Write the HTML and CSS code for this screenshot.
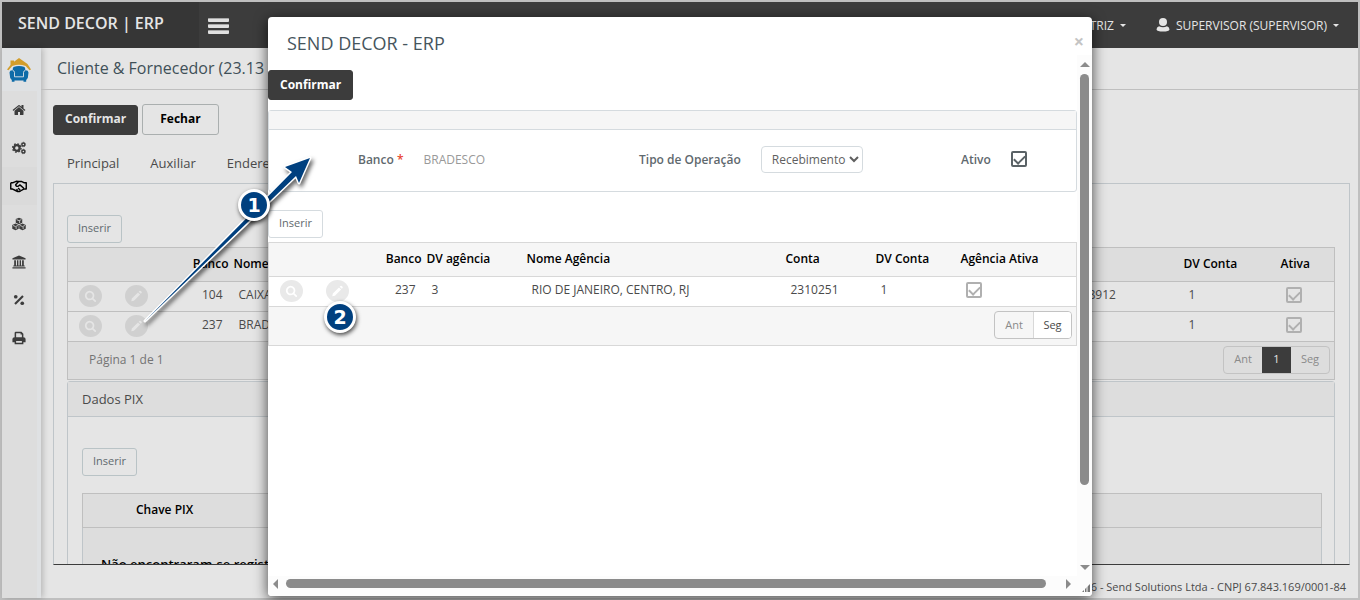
FILE: index.html
```html
<!DOCTYPE html>
<html lang="pt-BR">
<head>
    <meta charset="UTF-8">
    <meta name="viewport" content="width=device-width, initial-scale=1.0">
    <title>SEND DECOR | ERP</title>
    <link rel="stylesheet" href="styles.css">
</head>
<body>
    <!-- shared icons -->
    <svg class="sprite" aria-hidden="true">
        <symbol id="icon-search" viewBox="0 0 1792 1792"><path d="M1216 832q0-185-131.500-316.500t-316.500-131.500-316.500 131.500-131.500 316.500 131.500 316.500 316.500 131.500 316.500-131.500 131.500-316.500zm512 832q0 52-38 90t-90 38q-54 0-90-38l-343-342q-179 124-399 124-143 0-273.500-55.500t-225-150-150-225-55.500-273.500 55.500-273.500 150-225 225-150 273.500-55.500 273.500 55.500 225 150 150 225 55.500 273.500q0 220-124 399l343 343q37 37 37 90z"/></symbol>
        <symbol id="icon-pencil" viewBox="0 0 16 16"><path d="M10 3.200 12.800 6 4.600 14.200 1 15l.8-3.600zM10.900 2.300l1-1q.9-.8 1.800 0l1 1q.8.9 0 1.800l-1 1z"/></symbol>
    </svg>

    <div class="app">
        <header class="topbar">
            <a class="brand" href="#">SEND DECOR | ERP</a>
            <button class="menu-toggle" type="button" aria-label="Menu"><span></span><span></span><span></span></button>
            <div class="topbar-right">
                <a href="#">MATRIZ <i class="caret"></i></a>
                <a href="#">
                    <svg class="user" viewBox="0 0 14 14"><circle cx="7" cy="4" r="4"/><path d="M3 8.200Q7 10.500 11 8.200 13.500 9 13.500 11.500 13 13.500 7 13.500T.5 11.500Q.5 9 3 8.200z"/></svg>
                    SUPERVISOR (SUPERVISOR) <i class="caret"></i>
                </a>
            </div>
        </header>

        <div class="layout">
            <nav class="sidebar">
                <a class="logo" href="#" aria-label="Send Decor">
                    <svg viewBox="0 0 24 24">
                        <path fill="#d29d2b" d="M0 11.500 3.500 7V2.500H7v1.200L12 0l8.500 6L24 11.500l-1.500.8-3.800-4.300Q12 5.600 5.300 8l-3.800 4.300z"/>
                        <path fill="#0e6ba8" d="M6.500 9Q12 7.200 17.500 9 18.500 10.500 18.300 12.200 21.300 12 21.500 14.500L20.800 20l-1.600 2v1.800h-2.700v-1.300h-9v1.300H4.800V22l-1.600-2-.7-5.500Q2.700 12 5.700 12.200 5.500 10.500 6.500 9z"/>
                        <path fill="none" stroke="#dfe3e8" stroke-width=".9" d="M5.700 12.400q1.800.4 1.800 2.100v4.300h9v-4.300q0-1.700 1.800-2.100"/>
                    </svg>
                </a>
                <a href="#" aria-label="Início"><svg viewBox="0 0 1792 1792"><path d="M1472 992v480q0 26-19 45t-45 19h-384v-384h-256v384h-384q-26 0-45-19t-19-45v-480q0-1 .5-3t.5-3l575-474 575 474q1 2 1 6zm223-69l-62 74q-8 9-21 11h-3q-13 0-21-7l-692-577-692 577q-12 8-24 7-13-2-21-11l-62-74q-8-10-7-23.500t11-21.500l719-599q32-26 76-26t76 26l244 204v-195q0-14 9-23t23-9h192q14 0 23 9t9 23v408l219 182q10 8 11 21.500t-7 23.500z"/></svg></a>
                <a href="#" aria-label="Configurações"><svg viewBox="0 0 16 16"><g fill="none" stroke="#3c3c3c"><circle cx="5.500" cy="8" r="3.200" stroke-width="2.600"/><circle cx="5.500" cy="8" r="4.800" stroke-width="1.600" stroke-dasharray="1.900 1.870"/><circle cx="13" cy="4" r="1.700" stroke-width="1.600"/><circle cx="13" cy="4" r="2.600" stroke-width=".8" stroke-dasharray="1.100 1"/><circle cx="13" cy="12" r="1.700" stroke-width="1.600"/><circle cx="13" cy="12" r="2.600" stroke-width=".8" stroke-dasharray="1.100 1"/></g></svg></a>
                <a class="active" href="#" aria-label="Parceiros"><svg class="wide" viewBox="0 0 18 14"><g fill="none" stroke="#000" stroke-width="1.500" stroke-linejoin="round"><path d="M.8 3.500v6.700h2L7 12.300q2 1 4 0l3.500-2.100h2.700V3.500h-2.500L12 2.200H9.200L6 5.600q.2 2.400 2.800 1.600l1.700-1.400 4.100 3.600M9 2.300 6.500 2 3.300 3.500H.8"/><path d="m8.500 9.200 2.300 2M6.800 10.500l1.500 1.300"/></g></svg></a>
                <a href="#" aria-label="Estoque"><svg viewBox="0 0 16 16"><path d="M8 .8 11.700 2.400v4.100L8 8.200 4.300 6.500V2.400zM4 7.500l3.700 1.600v4.200L4 15 .3 13.300V9.100zM12 7.500l3.700 1.600v4.200L12 15l-3.700-1.700V9.100z"/><path fill="none" stroke="#ddd" stroke-width=".9" d="m5.200 3 2.800 1.200L10.800 3M8.700 7V4.600M1.200 9.700 4 10.900l2.800-1.200M4.700 13.700v-2.400M9.200 9.700l2.800 1.200 2.800-1.200M12.700 13.700v-2.400"/></svg></a>
                <a href="#" aria-label="Financeiro"><svg viewBox="0 0 16 16"><path d="M8 .5 15.500 3.600V5H.5V3.600zM2.500 6h2v6h-2zM5.700 6h1.600v6H5.700zM8.700 6h1.600v6H8.700zM11.500 6h2v6h-2zM1.500 12h13v1.200h-13zM.5 14h15v1.500H.5z"/></svg></a>
                <a href="#" aria-label="Impostos"><svg viewBox="0 0 16 16"><circle cx="4.300" cy="4.300" r="2.100"/><circle cx="11.700" cy="11.700" r="2.100"/><path d="m11.700 2.600 1.700 1.700-9.100 9.100-1.700-1.700z"/></svg></a>
                <a href="#" aria-label="Relatórios"><svg viewBox="0 0 16 16"><path fill-rule="evenodd" d="M3 7V2.200Q3 .8 4.300.8h6.500L13 3v4q2.500 0 2.500 2.200v3.600H13v2.400H3v-2.400H.5V9.200Q.5 7 3 7zm1.700 0h6.600V4H9.800V2.500H4.700zm0 4.500v2h6.600v-2z"/></svg></a>
            </nav>

            <main class="page">
                <h1>Cliente &amp; Fornecedor (23.13</h1>
                <div class="content">
                    <div class="actions">
                        <button class="btn btn-dark" type="button">Confirmar</button>
                        <button class="btn btn-light" type="button">Fechar</button>
                    </div>
                    <div class="tabs">
                        <a href="#">Principal</a>
                        <a href="#">Auxiliar</a>
                        <a href="#">Endereço</a>
                    </div>
                    <div class="panel">
                        <button class="btn-small" type="button">Inserir</button>
                        <table class="grid">
                            <colgroup><col class="c-icon"><col class="c-icon2"><col class="c-banco"><col><col class="c-conta"><col class="c-dv"><col class="c-ativa"></colgroup>
                            <thead>
                                <tr><th></th><th></th><th class="right">Banco</th><th>Nome</th><th></th><th>DV Conta</th><th>Ativa</th></tr>
                            </thead>
                            <tbody>
                                <tr>
                                    <td><button class="round" type="button" aria-label="Ver"><svg><use href="#icon-search"/></svg></button></td>
                                    <td><button class="round" type="button" aria-label="Editar"><svg><use href="#icon-pencil"/></svg></button></td>
                                    <td class="right">104</td><td>CAIXA</td><td>8912</td><td>1</td>
                                    <td><input class="check muted" type="checkbox" aria-label="Ativa" checked disabled></td>
                                </tr>
                                <tr>
                                    <td><button class="round" type="button" aria-label="Ver"><svg><use href="#icon-search"/></svg></button></td>
                                    <td><button class="round" type="button" aria-label="Editar"><svg><use href="#icon-pencil"/></svg></button></td>
                                    <td class="right">237</td><td>BRADESCO</td><td></td><td>1</td>
                                    <td><input class="check muted" type="checkbox" aria-label="Ativa" checked disabled></td>
                                </tr>
                            </tbody>
                        </table>
                        <div class="grid-footer">
                            <span>Página 1 de 1</span>
                            <div class="pager">
                                <button type="button">Ant</button><button class="current" type="button">1</button><button type="button">Seg</button>
                            </div>
                        </div>
                        <section class="pix">
                            <h2>Dados PIX</h2>
                            <div class="pix-body">
                                <button class="btn-small" type="button">Inserir</button>
                                <div class="pix-head">Chave PIX</div>
                                <div class="pix-empty">Não encontraram-se registros</div>
                            </div>
                        </section>
                    </div>
                </div>
                <footer class="copyright">© 2026 - Send Solutions Ltda - CNPJ 67.843.169/0001-84</footer>
            </main>
        </div>
    </div>

    <div class="modal" role="dialog" aria-labelledby="modalTitle">
        <div class="modal-header">
            <h2 id="modalTitle">SEND DECOR - ERP</h2>
            <button class="close" type="button" aria-label="Fechar">×</button>
        </div>
        <div class="modal-main">
            <div class="modal-body">
                <button class="btn btn-dark" type="button">Confirmar</button>
                <div class="card">
                    <div class="card-head"></div>
                    <form class="card-body">
                        <div class="field">
                            <span class="label">Banco <em>*</em></span>
                            <span class="value">BRADESCO</span>
                        </div>
                        <div class="field">
                            <label for="tipo">Tipo de Operação</label>
                            <select id="tipo"><option>Recebimento</option></select>
                        </div>
                        <div class="field">
                            <label for="ativo">Ativo</label>
                            <input class="check" id="ativo" type="checkbox" checked>
                        </div>
                    </form>
                </div>
                <button class="btn-small" type="button">Inserir</button>
                <table class="grid">
                    <colgroup><col class="c-icon"><col class="c-icon2"><col class="c-mbanco"><col class="c-dvag"><col><col class="c-mconta"><col class="c-mdv"><col class="c-mativa"></colgroup>
                    <thead>
                        <tr><th></th><th></th><th class="right">Banco</th><th>DV agência</th><th>Nome Agência</th><th>Conta</th><th>DV Conta</th><th>Agência Ativa</th></tr>
                    </thead>
                    <tbody>
                        <tr>
                            <td><button class="round" type="button" aria-label="Ver"><svg><use href="#icon-search"/></svg></button></td>
                            <td><button class="round" type="button" aria-label="Editar"><svg><use href="#icon-pencil"/></svg></button></td>
                            <td class="right">237</td><td>3</td><td>RIO DE JANEIRO, CENTRO, RJ</td><td>2310251</td><td>1</td>
                            <td><input class="check muted" type="checkbox" aria-label="Agência Ativa" checked disabled></td>
                        </tr>
                    </tbody>
                </table>
                <div class="grid-footer">
                    <span></span>
                    <div class="pager">
                        <button type="button">Ant</button><button class="enabled" type="button">Seg</button>
                    </div>
                </div>
            </div>
            <div class="scroll-y"><i class="up"></i><span></span><i class="down"></i></div>
        </div>
        <div class="scroll-x"><i class="left"></i><span></span><i class="right-arrow"></i><svg class="grip" viewBox="0 0 8 8"><path d="M8 0v8H0z"/><path stroke="#fcfcfc" d="M2.500 8V4M5 8V2"/></svg></div>
    </div>

    <!-- step markers -->
    <svg class="arrow" viewBox="0 0 200 190">
        <path d="M15 181 162 32 155 27 180 18 169 43 166 36z"/>
    </svg>
    <div class="step step-1">1</div>
    <div class="step step-2">2</div>
</body>
</html>
```
FILE: styles.css
```css
* {
    box-sizing: border-box;
}

body {
    margin: 0;
    position: relative;
    font-family: "Trebuchet MS", "Open Sans", sans-serif;
    font-size: 12px;
    color: #4a4a4a;
}

h1, h2 {
    margin: 0;
    font-weight: 400;
}

a {
    color: inherit;
    text-decoration: none;
}

button, select, input {
    font-family: inherit;
    margin: 0;
}

.sprite {
    display: none;
}

.app {
    height: 100vh;
    min-height: 600px;
    display: flex;
    flex-direction: column;
    border: 2px solid #bfbfbf;
    background: #e5e5e5;
}

/* top bar */
.topbar {
    display: flex;
    align-items: center;
    height: 46px;
    flex: none;
    background: #3c3c3c;
    color: #e5e5e5;
}

.brand {
    width: 197px;
    height: 46px;
    padding-left: 16px;
    line-height: 42px;
    background: #363636;
    font-size: 16px;
    font-weight: 600;
}

.menu-toggle {
    display: flex;
    flex-direction: column;
    gap: 2px;
    width: 39px;
    padding: 2px 9px 0;
    border: 0;
    background: none;
}

.menu-toggle span {
    height: 4px;
    border-top: 1px solid #a8a8a8;
    border-radius: 1px;
    background: #e0e0e0;
}

.topbar-right {
    display: flex;
    gap: 30px;
    margin-left: auto;
    padding-right: 19px;
}

.topbar-right a {
    display: flex;
    align-items: center;
    gap: 6px;
}

.user {
    width: 14px;
    height: 14px;
    fill: #e5e5e5;
}

.caret {
    border: 3px solid transparent;
    border-top-color: #e5e5e5;
    border-bottom: 0;
}

/* sidebar */
.layout {
    flex: 1;
    min-height: 0;
    display: flex;
}

.sidebar {
    width: 39px;
    flex: none;
    background: #ddd;
    border-right: 4px solid #dfe1e3;
    box-shadow: 2px 0 6px rgba(0, 0, 0, 0.2);
}

.sidebar a {
    display: flex;
    align-items: center;
    justify-content: center;
    height: 38px;
    padding-right: 2px;
}

.sidebar svg {
    width: 14px;
    height: 14px;
    fill: #3c3c3c;
}

.sidebar svg.wide {
    width: 17px;
}

.sidebar .active {
    background: #dadada;
}

.sidebar .logo {
    height: 43px;
    background: #dfe1e3;
}

.sidebar .logo svg {
    width: 24px;
    height: 24px;
}

/* page */
.page {
    flex: 1;
    min-width: 0;
    display: flex;
    flex-direction: column;
}

.page h1 {
    height: 42px;
    padding-left: 16px;
    line-height: 40px;
    font-size: 16px;
    color: #3f5058;
    border-bottom: 1px solid #bfbfbf;
}

.content {
    flex: 1;
    min-height: 0;
    display: flex;
    flex-direction: column;
    padding: 14px 8px 0 12px;
}

.actions {
    display: flex;
    align-items: center;
    gap: 4px;
}

.btn {
    height: 30px;
    padding: 0 11px 2px;
    border: 1px solid #3c3c3c;
    border-radius: 3px;
    font-size: 12px;
    font-weight: 700;
}

.btn-dark {
    background: #3c3c3c;
    color: #e5e5e5;
}

.btn-light {
    height: 31px;
    padding: 0 17px 2px;
    border-color: #aaafaf;
    background: #e5e5e5;
    color: #000;
}

.tabs {
    display: flex;
    gap: 31px;
    height: 48px;
    padding: 0 14px;
    line-height: 56px;
    font-size: 13px;
    flex: none;
}

.panel {
    flex: 1;
    min-height: 0;
    overflow: hidden;
    padding: 31px 14px 0 13px;
    border: 1px solid #bfc5c9;
    border-bottom-color: #3c3c3c;
}

.btn-small {
    display: block;
    height: 28px;
    padding: 0 10px 3px;
    border: 1px solid #b9c3c6;
    border-radius: 3px;
    background: transparent;
    font-size: 11px;
    color: #5f696e;
}

/* tables */
.grid {
    width: 100%;
    margin-top: 4px;
    table-layout: fixed;
    border-collapse: collapse;
    border: 1px solid #bfbfbf;
}

.grid th {
    height: 34px;
    padding: 0 0 2px 5px;
    background: #ddd;
    color: #000;
    font-weight: 600;
    text-align: left;
    white-space: nowrap;
}

.grid td {
    height: 30px;
    padding: 0 6px 4px 10px;
    border-top: 1px solid #bfbfbf;
    white-space: nowrap;
}

.grid td:nth-child(-n+2) {
    padding: 0 0 2px 11px;
}

.grid .right {
    text-align: right;
}

.c-icon {
    width: 46px;
}

.c-icon2 {
    width: 48px;
}

.c-banco {
    width: 67px;
}

.c-conta {
    width: 100px;
}

.c-dv {
    width: 97px;
}

.c-ativa {
    width: 59px;
}

.round {
    display: block;
    width: 23px;
    height: 22px;
    padding: 5px;
    border: 0;
    border-radius: 50%;
    background: #d0d0d0;
}

.round svg {
    display: block;
    width: 13px;
    height: 12px;
    fill: #e5e5e5;
}

.check {
    appearance: none;
    display: block;
    width: 16px;
    height: 16px;
    border: 2px solid #5a6266;
    border-radius: 2px;
}

.check::after {
    content: "";
    display: block;
    width: 9px;
    height: 5px;
    margin: 2px 1px;
    border-left: 2px solid #5a6266;
    border-bottom: 2px solid #5a6266;
    transform: rotate(-45deg);
}

.check.muted, .check.muted::after {
    border-color: #b0b0b0;
}

.grid-footer {
    display: flex;
    align-items: center;
    justify-content: space-between;
    height: 38px;
    padding: 0 4px 2px 21px;
    border: 1px solid #bfbfbf;
    border-top: 0;
    background: #ddd;
    color: #747474;
}

.pager {
    display: flex;
    border: 1px solid #c3c3c3;
    border-radius: 4px;
    overflow: hidden;
}

.pager button {
    min-width: 38px;
    height: 26px;
    padding: 0 0 2px;
    border: 0;
    background: transparent;
    font-size: 11px;
    color: #8a8a8a;
}

.pager .current {
    min-width: 29px;
    background: #3c3c3c;
    color: #e5e5e5;
}

.pager .enabled {
    border-left: 1px solid #d8d8d8;
    background: #fff;
    color: #4a4a4a;
}

.pix {
    margin-top: 1px;
    border: 1px solid #bfc5c9;
    border-radius: 3px;
}

.pix h2 {
    height: 35px;
    padding-left: 14px;
    line-height: 34px;
    border-bottom: 1px solid #bfc5c9;
    background: #ddd;
    font-size: 13px;
}

.pix-body {
    padding: 31px 12px 0 14px;
}

.pix-head {
    height: 35px;
    margin-top: 17px;
    padding-left: 53px;
    line-height: 31px;
    border: 1px solid #bfbfbf;
    background: #ddd;
    color: #000;
    font-weight: 600;
}

.pix-empty {
    height: 70px;
    padding: 27px 18px;
    border: 1px solid #bfc5c9;
    border-top: 0;
    background: #ddd;
    color: #000;
    font-size: 13px;
    font-weight: 600;
}

.copyright {
    height: 33px;
    flex: none;
    padding-right: 12px;
    line-height: 44px;
    text-align: right;
    font-size: 11px;
    overflow: hidden;
}

/* modal */
.modal {
    position: absolute;
    top: 17px;
    right: 268px;
    bottom: 4px;
    left: 268px;
    display: flex;
    flex-direction: column;
    overflow: hidden;
    border-radius: 4px;
    background: #fff;
}

.app::after {
    content: "";
    position: absolute;
    top: 17px;
    right: 268px;
    bottom: 4px;
    left: 268px;
    border-radius: 4px;
    box-shadow: 0 3px 14px rgba(0, 0, 0, 0.7);
}

.modal-header {
    display: flex;
    justify-content: space-between;
    height: 38px;
    padding: 0 8px 0 19px;
    flex: none;
}

.modal-header h2 {
    line-height: 52px;
    font-size: 18px;
    color: #46555d;
}

.close {
    padding: 10px 0 0;
    border: 0;
    background: none;
    color: #c4c4c4;
    font-size: 18px;
    font-weight: 700;
}

.modal-main {
    flex: 1;
    min-height: 0;
    display: flex;
}

.modal-body {
    flex: 1;
    min-width: 0;
    overflow: hidden;
    padding-top: 15px;
}

.modal .btn-dark {
    color: #fff;
}

.card {
    margin: 10px 0 18px;
    border: 1px solid #d5dbdf;
    border-radius: 3px;
}

.card-head {
    height: 19px;
    border-bottom: 1px solid #d5dbdf;
    background: #f6f6f6;
}

.card-body {
    display: grid;
    grid-template-columns: 281px 322px 1fr;
    height: 61px;
    padding: 0 0 3px 89px;
}

.field {
    display: flex;
    align-items: center;
    gap: 20px;
    color: #5f696e;
}

.field label, .field .label {
    font-weight: 600;
}

.field em {
    color: #e8432e;
    font-style: normal;
}

.value {
    color: #999;
}

.field select {
    height: 27px;
    padding: 0 0 0 6px;
    border: 1px solid #d5dbdf;
    border-radius: 4px;
    background: #fff;
    color: #5f5f5f;
    font-size: 12px;
}

.modal .btn-small {
    border-color: #d5dbdf;
}

.modal .grid, .modal .grid td, .modal .grid-footer {
    border-color: #d8d8d8;
}

.modal .grid th, .modal .grid-footer {
    background: #f6f6f6;
}

.modal .grid-footer {
    height: 39px;
}

.c-mbanco {
    width: 59px;
}

.c-dvag {
    width: 100px;
}

.c-mconta {
    width: 90px;
}

.c-mdv {
    width: 85px;
}

.c-mativa {
    width: 121px;
}

.modal .round {
    background: #e9e9e9;
}

.modal .round svg {
    fill: #fff;
}

.scroll-y {
    display: flex;
    flex-direction: column;
    align-items: center;
    width: 15px;
    padding: 7px 0 6px;
    background: #fcfcfc;
}

.scroll-y span {
    flex: 0 0 81%;
    width: 9px;
    margin-top: 7px;
    border-radius: 5px;
    background: #8b8b8b;
}

.scroll-x {
    display: flex;
    align-items: center;
    height: 20px;
    flex: none;
    padding: 0 2px 5px 5px;
    background: #fcfcfc;
}

.scroll-x span {
    flex: 1;
    height: 9px;
    margin: 0 20px 0 8px;
    border-radius: 5px;
    background: #8b8b8b;
}

.scroll-y i, .scroll-x i {
    border: 5px solid transparent;
}

.scroll-y .up {
    border-bottom-color: #8b8b8b;
    border-top: 0;
}

.scroll-y .down {
    margin-top: auto;
    border-top-color: #8b8b8b;
    border-bottom: 0;
}

.scroll-x .left {
    border-right-color: #8b8b8b;
    border-left: 0;
}

.scroll-x .right-arrow {
    border-left-color: #8b8b8b;
    border-right: 0;
}

.grip {
    width: 8px;
    height: 8px;
    margin: 8px 0 0 11px;
    fill: #777;
}

/* step markers lie over the whole page */
.arrow {
    position: absolute;
    top: 140px;
    left: 130px;
    width: 200px;
    height: 190px;
    fill: #00407f;
    stroke: #fff;
    stroke-width: 3px;
    stroke-linejoin: round;
    paint-order: stroke;
    overflow: visible;
    filter: drop-shadow(2px 3px 2px rgba(0, 0, 0, 0.6));
    pointer-events: none;
}

.step {
    position: absolute;
    width: 32px;
    height: 32px;
    border: 3px solid #fff;
    border-radius: 50%;
    background: #00407f;
    box-shadow: 1px 2px 4px rgba(0, 0, 0, 0.7);
    color: #fff;
    font-family: "DejaVu Sans", sans-serif;
    font-size: 19px;
    font-weight: 700;
    line-height: 26px;
    text-align: center;
}

.step-1 {
    top: 189px;
    left: 238px;
}

.step-2 {
    top: 301px;
    left: 324px;
}
```
